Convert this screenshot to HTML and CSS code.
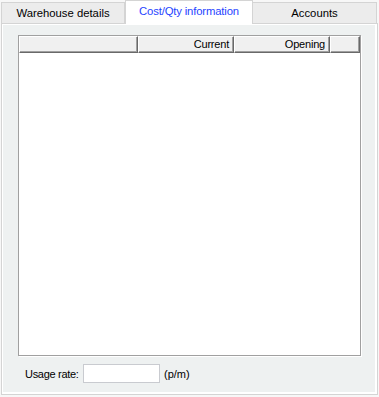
FILE: index.html
```html
<!DOCTYPE html>
<html>
<head>
<meta charset="utf-8">
<link rel="stylesheet" href="styles.css">
</head>
<body>
<div class="tabctl">
  <div class="tabs">
    <div class="tab">Warehouse details</div>
    <div class="tab active">Cost/Qty information</div>
    <div class="tab">Accounts</div>
  </div>
  <div class="panel">
    <div class="list">
      <div class="header">
        <div class="hcell c1"></div>
        <div class="hcell c2">Current</div>
        <div class="hcell c3">Opening</div>
        <div class="hcell c4"></div>
      </div>
      <div class="body"></div>
    </div>
    <div class="usage">
      <span class="lbl">Usage rate:</span>
      <span class="input"></span>
      <span class="unit">(p/m)</span>
    </div>
  </div>
</div>
</body>
</html>
```

FILE: styles.css
```css
html, body {
  margin: 0;
  padding: 0;
  background: #f7f7f7;
  font-family: "Liberation Sans", Arial, sans-serif;
  font-size: 11px;
  color: #000;
}
.tabctl {
  width: 377px;
  padding-left: 1px;
}
.tabs {
  display: flex;
  height: 24px;
  position: relative;
  z-index: 2;
}
.tab {
  box-sizing: border-box;
  width: 124px;
  height: 21px;
  margin-top: 2px;
  background: #ececec;
  border: 1px solid #d4d4d4;
  border-bottom: none;
  display: flex;
  align-items: center;
  justify-content: center;
  padding-bottom: 1px;
  font-size: 11.3px;
}
.tab + .tab { border-left: none; }
.tab.active {
  width: 128px;
  height: 24px;
  margin-top: 0;
  background: #fff;
  color: #1f45ff;
  letter-spacing: -0.15px;
  border-left: 1px solid #d4d4d4;
  padding-bottom: 3px;
}
.tab.active + .tab { border-left: none; }
.panel {
  box-sizing: border-box;
  margin-top: -1px;
  height: 372px;
  border: 1px solid #d4d4d4;
  background: #eef1f1;
  box-shadow: inset -2px -2px 0 #fff, inset 1px 1px 0 #fff;
  padding: 11px 0 0 16px;
}
.list {
  box-sizing: border-box;
  width: 343px;
  height: 321px;
  border: 1px solid #a0a0a0;
  box-shadow: 1px 1px 0 #fff;
  background: #fff;
}
.header {
  display: flex;
  height: 17px;
}
.hcell {
  box-sizing: border-box;
  height: 17px;
  background: #f0f0f0;
  border-top: 1px solid #fff;
  border-left: 1px solid #fff;
  border-right: 1px solid #696969;
  border-bottom: 1px solid #696969;
  box-shadow: inset -1px -1px 0 #a0a0a0;
  text-align: right;
  padding-right: 4px;
  line-height: 14px;
  letter-spacing: -0.2px;
}
.c1 { width: 119px; }
.c2 { width: 96px; }
.c3 { width: 96px; }
.c4 { flex: 1; }
.usage {
  display: flex;
  align-items: center;
  margin-top: 8px;
  height: 19px;
  padding-left: 7px;
}
.lbl { letter-spacing: -0.3px; width: 58px; }
.input {
  box-sizing: border-box;
  width: 77px;
  height: 19px;
  background: #fff;
  border: 1px solid #c9cbd0;
}
.unit { margin-left: 4px; }
```
